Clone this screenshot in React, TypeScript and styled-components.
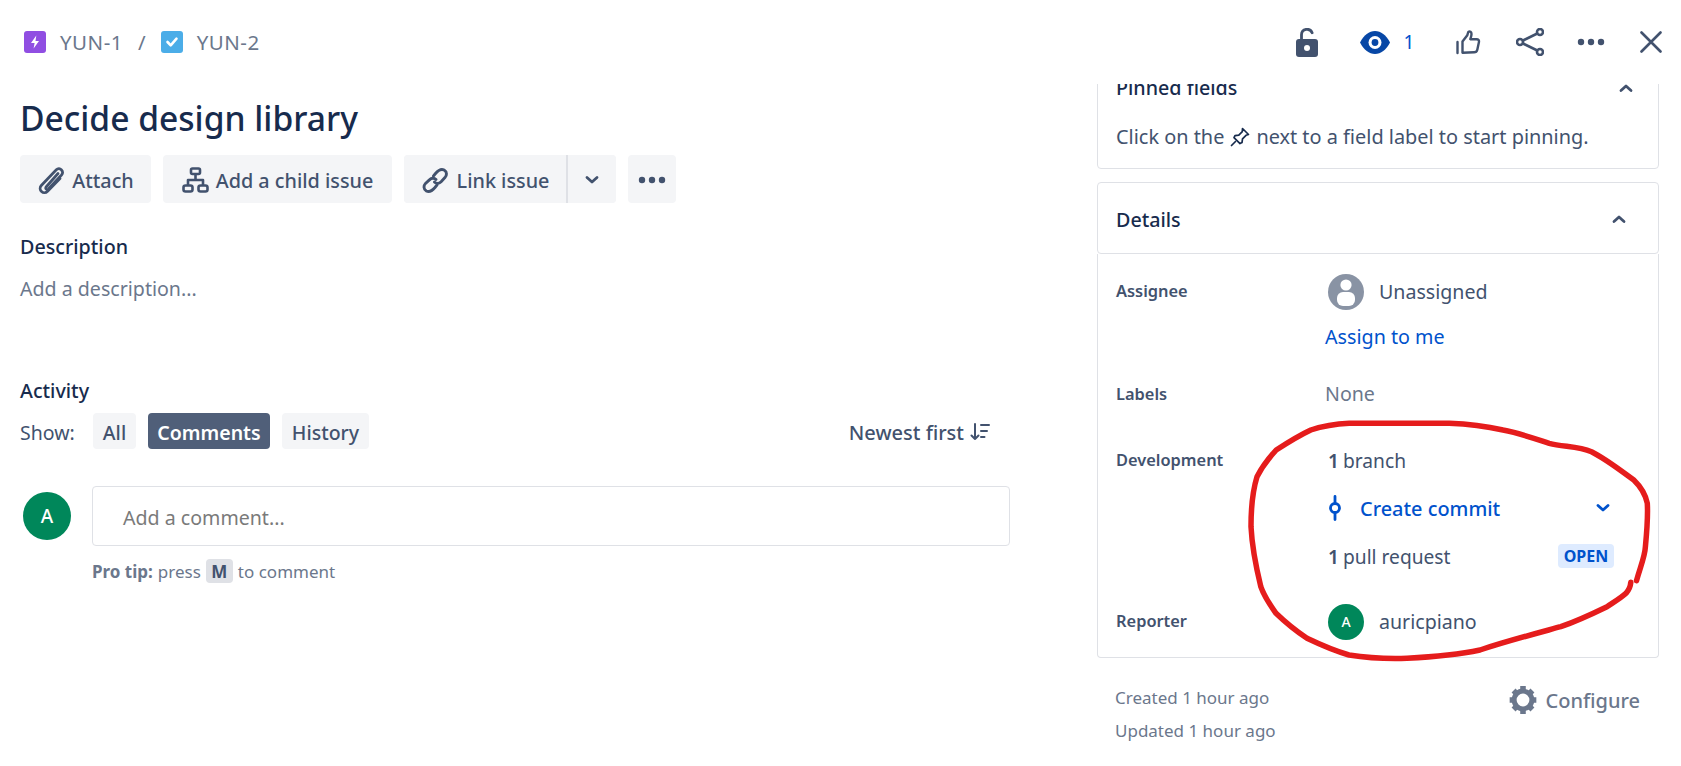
import React from "react";
import styled, { createGlobalStyle } from "styled-components";

const GlobalStyle = createGlobalStyle`
  html, body {
    margin: 0;
    padding: 0;
    background: #fff;
  }
  body {
    font-family: "Noto Sans", "Open Sans", sans-serif;
    font-size: 19.6px;
    color: #172b4d;
  }
  * {
    box-sizing: border-box;
  }
`;

const Page = styled.div`
  position: relative;
  width: 1681px;
  height: 766px;
  overflow: hidden;
`;

const Header = styled.header`
  display: flex;
  align-items: center;
  justify-content: space-between;
  height: 84px;
`;

const Breadcrumbs = styled.nav`
  display: flex;
  align-items: center;
  height: 84px;
  padding-left: 24px;
  color: #6b778c;
  font-size: 20.5px;
`;

const Crumb = styled.span`
  margin-left: 14px;
  letter-spacing: 0.5px;
`;

const CrumbSep = styled.span`
  margin: 0 15px 0 15px;
`;

const Actions = styled.div`
  display: flex;
  align-items: center;
  height: 84px;
`;

const ActionSlot = styled.div<{ $w: number }>`
  display: flex;
  align-items: center;
  justify-content: center;
  width: ${(p) => p.$w}px;
  color: #42526e;
`;

const WatchCount = styled.span`
  margin-left: 14px;
  color: #0052cc;
  font-size: 19px;
`;

const Main = styled.main`
  display: grid;
  grid-template-columns: 1097px 562px;
  height: 682px;
`;

const Left = styled.section`
  padding: 12px 0 0 20px;
`;

const Title = styled.h1`
  margin: 0;
  font-size: 33.6px;
  line-height: 44px;
  font-weight: 500;
  color: #172b4d;
`;

const Toolbar = styled.div`
  display: flex;
  gap: 12px;
  margin-top: 15px;
`;

const ToolButton = styled.button<{ $w: number }>`
  display: flex;
  align-items: center;
  justify-content: center;
  gap: 7px;
  width: ${(p) => p.$w}px;
  height: 48px;
  padding: 2px 0 0;
  border: 0;
  border-radius: 4px;
  background: #f4f5f7;
  color: #42526e;
  font: 500 19.8px "Noto Sans", sans-serif;
`;

const SplitButton = styled.div`
  display: flex;
  width: 212px;
  height: 48px;
  border-radius: 4px;
  overflow: hidden;
  background: #f4f5f7;
`;

const SplitMain = styled(ToolButton)`
  border-right: 2px solid #dfe1e6;
  border-radius: 0;
`;

const SplitCaret = styled(ToolButton)`
  border-radius: 0;
`;

const SectionTitle = styled.h2<{ $top: number }>`
  margin: ${(p) => p.$top}px 0 0;
  font-size: 19.7px;
  line-height: 24px;
  font-weight: 500;
  color: #172b4d;
`;

const Placeholder = styled.p`
  margin: 18px 0 0;
  font-size: 19.6px;
  line-height: 24px;
  color: #6b778c;
`;

const ShowRow = styled.div`
  display: flex;
  align-items: center;
  width: 970px;
  height: 36px;
  margin-top: 10px;
  color: #42526e;
`;

const ShowLabel = styled.span`
  width: 73px;
  padding-top: 2px;
  font-size: 19.5px;
`;

const FilterGroup = styled.div`
  display: flex;
  gap: 12px;
`;

const Filter = styled.button<{ $active?: boolean; $w: number }>`
  width: ${(p) => p.$w}px;
  height: 36px;
  padding: 2px 0 0;
  border: 0;
  border-radius: 4px;
  background: ${(p) => (p.$active ? "#505f79" : "#f4f5f7")};
  color: ${(p) => (p.$active ? "#fff" : "#42526e")};
  font: ${(p) => (p.$active ? 600 : 500)} 19.5px "Noto Sans", sans-serif;
  white-space: nowrap;
`;

const SortButton = styled.div`
  display: flex;
  align-items: center;
  gap: 6px;
  margin-left: auto;
  padding-top: 2px;
  font-size: 20px;
  font-weight: 500;
  color: #42526e;
`;

const CommentRow = styled.div`
  display: flex;
  margin-top: 37px;
`;

const Avatar = styled.div<{ $size: number; $font: number }>`
  display: flex;
  align-items: center;
  justify-content: center;
  flex: none;
  width: ${(p) => p.$size}px;
  height: ${(p) => p.$size}px;
  border-radius: 50%;
  background: #00875a;
  color: #fff;
  font-size: ${(p) => p.$font}px;
  font-weight: 500;
`;

const CommentAvatar = styled(Avatar)`
  margin: 6px 21px 0 3px;
`;

const CommentBox = styled.div`
  display: flex;
  align-items: center;
  width: 918px;
  height: 60px;
  padding: 2px 0 0 30px;
  border: 1px solid #dfe1e6;
  border-radius: 4px;
  color: #7a7a7a;
  font-size: 19.6px;
`;

const ProTip = styled.div`
  display: flex;
  align-items: center;
  gap: 5px;
  height: 24px;
  margin: 13px 0 0 72px;
  color: #6b778c;
  font-size: 17px;
`;

const ProTipLabel = styled.strong`
  font-weight: 700;
`;

const Key = styled.kbd`
  display: inline-flex;
  align-items: center;
  justify-content: center;
  width: 27px;
  height: 24px;
  border-radius: 4px;
  background: #dfe1e6;
  color: #42526e;
  font: 700 17px "Noto Sans", sans-serif;
`;

const Right = styled.aside`
  overflow: hidden;
`;

const PinnedCard = styled.div`
  height: 120px;
  margin-top: -35px;
  padding: 0 22px 0 18px;
  border: 1px solid #dfe1e6;
  border-radius: 4px;
`;

const CardHead = styled.div`
  display: flex;
  align-items: center;
  justify-content: space-between;
  height: 72px;
  font-size: 19.7px;
  font-weight: 500;
  color: #172b4d;
`;

const PinnedHead = styled(CardHead)`
  height: 75px;
`;

const PinnedText = styled.div`
  display: flex;
  align-items: center;
  gap: 6px;
  color: #42526e;
  font-size: 19.9px;
  line-height: 24px;
`;

const DetailsHead = styled(CardHead)`
  margin-top: 13px;
  padding: 2px 29px 0 18px;
  border: 1px solid #dfe1e6;
  border-radius: 4px;
`;

const DetailsBody = styled.div`
  padding: 20px 18px 17px;
  border: 1px solid #dfe1e6;
  border-top: 0;
  border-radius: 0 0 4px 4px;
`;

const Field = styled.div<{ $top?: number }>`
  display: grid;
  grid-template-columns: 209px 1fr;
  margin-top: ${(p) => p.$top ?? 0}px;
`;

const FieldLabel = styled.div<{ $pad?: number }>`
  padding-top: ${(p) => p.$pad ?? 0}px;
  color: #42526e;
  font-size: 16.4px;
  line-height: 24px;
  font-weight: 600;
`;

const FieldValue = styled.div`
  display: flex;
  align-items: center;
  min-height: 24px;
  color: #42526e;
  font-size: 19.6px;
  line-height: 24px;
`;

const PersonValue = styled(FieldValue)`
  gap: 15px;
  padding-left: 3px;
`;

const UnassignedAvatar = styled.div`
  flex: none;
  width: 36px;
  height: 36px;
`;

const AssignLink = styled.a`
  display: block;
  margin-top: 15px;
  color: #0052cc;
  font-size: 19.7px;
  line-height: 24px;
`;

const MutedValue = styled(FieldValue)`
  color: #6b778c;
`;

const DevRow = styled.div<{ $top?: number }>`
  display: flex;
  align-items: center;
  justify-content: space-between;
  height: 24px;
  margin-top: ${(p) => p.$top ?? 0}px;
  padding: 0 27px 0 3px;
  color: #42526e;
  font-size: 19.2px;
`;

const Count = styled.b`
  font-weight: 600;
  margin-right: 4px;
`;

const CommitLink = styled.div`
  display: flex;
  align-items: center;
  gap: 18px;
  color: #0052cc;
  font-size: 19.9px;
  font-weight: 500;
`;

const Lozenge = styled.span`
  display: flex;
  align-items: center;
  justify-content: center;
  width: 56px;
  height: 24px;
  margin-right: -1px;
  border-radius: 4px;
  background: #deebff;
  color: #0052cc;
  font-size: 16px;
  font-weight: 700;
`;

const Footer = styled.footer`
  display: flex;
  justify-content: space-between;
  margin-top: 23px;
  padding: 0 19px 0 18px;
`;

const Stamps = styled.div`
  color: #6b778c;
  font-size: 17px;
  line-height: 33px;
`;

const Configure = styled.div`
  display: flex;
  align-items: center;
  gap: 8px;
  height: 38px;
  color: #6b778c;
  font-size: 20px;
  font-weight: 500;
`;

const Annotation = styled.svg`
  position: absolute;
  top: 0;
  left: 0;
  pointer-events: none;
`;

const Chevron = ({ up, color = "#42526e" }: { up?: boolean; color?: string }) => (
  <svg width="20" height="20" viewBox="0 0 20 20" fill="none">
    <path
      d={up ? "M5 12.5 10 8l5 4.5" : "M5 7.5 10 12l5-4.5"}
      stroke={color}
      strokeWidth="2.8"
      strokeLinecap="round"
      strokeLinejoin="round"
    />
  </svg>
);

const Dots = () => (
  <svg width="28" height="8" viewBox="0 0 28 8">
    <circle cx="4" cy="4" r="3.2" fill="#42526e" />
    <circle cx="14" cy="4" r="3.2" fill="#42526e" />
    <circle cx="24" cy="4" r="3.2" fill="#42526e" />
  </svg>
);

const PersonIcon = () => (
  <svg width="36" height="36" viewBox="0 0 36 36">
    <circle cx="18" cy="18" r="18" fill="#8993a4" />
    <circle cx="18" cy="11" r="5.6" fill="#fff" />
    <rect x="9" y="18" width="18" height="14" rx="6" fill="#fff" />
  </svg>
);

export default function App() {
  return (
    <Page>
      <GlobalStyle />
      <Header>
        <Breadcrumbs>
          <svg width="22" height="22" viewBox="0 0 22 22">
            <rect width="22" height="22" rx="3" fill="#904ee2" />
            <path d="M12.3 4.5 7 12h3.6l-1 5.5L15 10h-3.5z" fill="#fff" />
          </svg>
          <Crumb>YUN-1</Crumb>
          <CrumbSep>/</CrumbSep>
          <svg width="22" height="22" viewBox="0 0 22 22">
            <rect width="22" height="22" rx="3" fill="#4bade8" />
            <path d="m6.5 11 3.2 3.3 5.8-6.6" fill="none" stroke="#fff" strokeWidth="2.6" strokeLinecap="round" strokeLinejoin="round" />
          </svg>
          <Crumb>YUN-2</Crumb>
        </Breadcrumbs>
        <Actions>
          <ActionSlot $w={60}>
            <svg width="22" height="29" viewBox="0 0 22 29">
              <path d="M5.5 14V6.8a5.5 5.5 0 0 1 10.6-2" fill="none" stroke="#42526e" strokeWidth="2.8" strokeLinecap="round" />
              <rect y="11" width="22" height="18" rx="3" fill="#42526e" />
              <circle cx="11" cy="20" r="3" fill="#fff" />
            </svg>
          </ActionSlot>
          <ActionSlot $w={100}>
            <svg width="30" height="23" viewBox="0 0 30 23">
              <path d="M0 11.5C4 4 9 0 15 0s11 4 15 11.5C26 19 21 23 15 23S4 19 0 11.5z" fill="#0747a6" />
              <circle cx="15" cy="11.5" r="6.5" fill="#fff" />
              <circle cx="15" cy="11.5" r="3.4" fill="#0747a6" />
            </svg>
            <WatchCount>1</WatchCount>
          </ActionSlot>
          <ActionSlot $w={62}>
            <svg width="25" height="25" viewBox="0 0 25 25" fill="none" stroke="#42526e" strokeWidth="2.4" strokeLinecap="round" strokeLinejoin="round">
              <path d="M1.5 12v11" />
              <path d="M6.5 22.8V11.5l4.8-6.3c.6-1.3.5-2.5 1.2-3.5 1.4-.7 3 .3 3 2.2 0 2-.7 3.7-1.2 5.3h6.2c2 0 2.8 1.3 2.4 3l-1.6 7.5c-.4 1.8-1.5 2.6-3.2 2.6z" />
            </svg>
          </ActionSlot>
          <ActionSlot $w={62}>
            <svg width="28" height="28" viewBox="0 0 28 28" fill="none" stroke="#42526e" strokeWidth="2.6">
              <circle cx="24" cy="4" r="3" />
              <circle cx="4" cy="14" r="3" />
              <circle cx="24" cy="24" r="3" />
              <path d="m7 12.5 14.3-7M7 15.5l14.3 7" />
            </svg>
          </ActionSlot>
          <ActionSlot $w={60}>
            <Dots />
          </ActionSlot>
          <ActionSlot $w={60}>
            <svg width="22" height="22" viewBox="0 0 22 22" fill="none" stroke="#42526e" strokeWidth="2.6" strokeLinecap="round">
              <path d="m1.5 1.5 19 19M20.5 1.5l-19 19" />
            </svg>
          </ActionSlot>
        </Actions>
      </Header>
      <Main>
        <Left>
          <Title>Decide design library</Title>
          <Toolbar>
            <ToolButton $w={131}>
              <svg width="28" height="30" viewBox="0 0 28 30" fill="none" stroke="#42526e" strokeWidth="2.7" strokeLinecap="round">
                <path d="M21 8.5 9.5 21.5c-1.700 1.900-.1 4 1.900 2.500L24.500 10c3-3.500-1.800-8.700-5.200-5.200L4.300 20.500c-3.700 4.200 2.200 10 6.300 5.800L23 13.500" />
              </svg>
              Attach
            </ToolButton>
            <ToolButton $w={229}>
              <svg width="27" height="26" viewBox="0 0 27 26" fill="none" stroke="#42526e" strokeWidth="2.6" strokeLinejoin="round">
                <rect x="9" y="1.5" width="9" height="5.5" rx="1.5" />
                <rect x="1.5" y="18.5" width="9" height="6" rx="2" />
                <rect x="16.5" y="18.5" width="9" height="6" rx="2" />
                <path d="M13.5 7v6M6 18.5V13h15v5.5" />
              </svg>
              Add a child issue
            </ToolButton>
            <SplitButton>
              <SplitMain $w={164}>
                <svg width="29" height="29" viewBox="0 0 27 27" fill="none" stroke="#42526e" strokeWidth="2.7" strokeLinecap="round">
                  <path d="M11.5 9.5l2-2.500c2.400-2.800 5-4.800 8-3.200 3 1.800 2.600 5 .8 7l-3.600 3.800c-2 2-4.600 2-6.200.3" />
                  <path d="M15 17.5l-2 2.500c-2.400 2.800-5 4.800-8 3.200-3-1.800-2.600-5-.8-7L7.800 12.900c2-2 4.600-2 6.200-.3" />
                </svg>
                Link issue
              </SplitMain>
              <SplitCaret $w={48}>
                <Chevron />
              </SplitCaret>
            </SplitButton>
            <ToolButton $w={48}>
              <Dots />
            </ToolButton>
          </Toolbar>
          <SectionTitle $top={32}>Description</SectionTitle>
          <Placeholder>Add a description...</Placeholder>
          <SectionTitle $top={78}>Activity</SectionTitle>
          <ShowRow>
            <ShowLabel>Show:</ShowLabel>
            <FilterGroup>
              <Filter $w={43}>All</Filter>
              <Filter $active $w={122}>Comments</Filter>
              <Filter $w={87}>History</Filter>
            </FilterGroup>
            <SortButton>
              Newest first
              <svg width="20" height="20" viewBox="0 0 20 20" fill="none" stroke="#42526e" strokeWidth="2" strokeLinecap="round" strokeLinejoin="round">
                <path d="M5 2v15M1.5 13.5 5 17l3.5-3.500M11 3h8M11 9h6M11 15h3.500" />
              </svg>
            </SortButton>
          </ShowRow>
          <CommentRow>
            <CommentAvatar $size={48} $font={19}>A</CommentAvatar>
            <CommentBox>Add a comment...</CommentBox>
          </CommentRow>
          <ProTip>
            <ProTipLabel>Pro tip:</ProTipLabel> press <Key>M</Key> to comment
          </ProTip>
        </Left>
        <Right>
          <PinnedCard>
            <PinnedHead>
              Pinned fields
              <Chevron up />
            </PinnedHead>
            <PinnedText>
              Click on the
              <svg width="20" height="20" viewBox="0 0 20 20" fill="none" stroke="#172b4d" strokeWidth="1.7" strokeLinejoin="round" strokeLinecap="round">
                <path d="m12.5 1.5 6 6-2.500.8-3.500 3.500-.5 3.800-2 1-6-6 1-2 3.800-.5 3.500-3.500z" />
                <path d="m5.5 14.5-4 4" />
              </svg>
              next to a field label to start pinning.
            </PinnedText>
          </PinnedCard>
          <DetailsHead>
            Details
            <Chevron up />
          </DetailsHead>
          <DetailsBody>
            <Field>
              <FieldLabel $pad={5}>Assignee</FieldLabel>
              <div>
                <PersonValue>
                  <UnassignedAvatar>
                    <PersonIcon />
                  </UnassignedAvatar>
                  Unassigned
                </PersonValue>
                <AssignLink>Assign to me</AssignLink>
              </div>
            </Field>
            <Field $top={33}>
              <FieldLabel>Labels</FieldLabel>
              <MutedValue>None</MutedValue>
            </Field>
            <Field $top={42}>
              <FieldLabel>Development</FieldLabel>
              <div>
                <DevRow>
                  <span>
                    <Count>1</Count>branch
                  </span>
                </DevRow>
                <DevRow $top={24}>
                  <CommitLink>
                    <svg width="14" height="26" viewBox="0 0 14 26" fill="none" stroke="#0052cc" strokeWidth="2.8" strokeLinecap="round">
                      <circle cx="7" cy="13" r="4.5" />
                      <path d="M7 1.5v7M7 17.5v7" />
                    </svg>
                    Create commit
                  </CommitLink>
                  <Chevron color="#0052cc" />
                </DevRow>
                <DevRow $top={24}>
                  <span>
                    <Count>1</Count>pull request
                  </span>
                  <Lozenge>OPEN</Lozenge>
                </DevRow>
              </div>
            </Field>
            <Field $top={36}>
              <FieldLabel $pad={5}>Reporter</FieldLabel>
              <PersonValue>
                <Avatar $size={36} $font={14}>A</Avatar>
                auricpiano
              </PersonValue>
            </Field>
          </DetailsBody>
          <Footer>
            <Stamps>
              Created 1 hour ago
              <br />
              Updated 1 hour ago
            </Stamps>
            <Configure>
              <svg width="30" height="30" viewBox="0 0 27 27" fill="none" stroke="#6b778c">
                <circle cx="13.5" cy="13.5" r="8" strokeWidth="4.5" />
                <path d="M13.5 1v4M13.5 22v4M1.5 13.5h4M21.5 13.5h4M5 5l2.800 2.800M19.200 19.200 22 22M22 5l-2.800 2.800M7.800 19.200 5 22" strokeWidth="5" />
              </svg>
              Configure
            </Configure>
          </Footer>
        </Right>
      </Main>
      <Annotation width="1681" height="766" viewBox="0 0 1681 766" fill="none">
        <path
          d="M1636.500 580.700C1641 565 1645 556 1645.400 546.700C1647 530 1648 515 1647.300 503.300C1645 492 1640 486 1633.800 480C1620 470 1606 459 1591.500 451.700C1578 446 1563 447 1549.200 443.300C1533 438 1519 433 1503 430C1485 426 1468 424 1449.200 423.300L1349.200 423.300C1335 424 1323 426 1310.800 430C1298 436 1287 443 1276.200 450C1268 459 1262 467 1257 476.700C1252 493 1251 510 1251 526.700C1252 547 1256 567 1260.800 586.700C1264 596 1270 605 1276 613.300C1285 622 1296 631 1307 638.300C1321 645 1335 651 1349 655C1368 658 1387 659 1407 658.300C1431 657 1456 655 1480 650C1507 641 1534 634 1560.800 626.700C1577 621 1592 614 1607 606.700C1614 602 1621 598 1626 593.300C1629 590 1630.500 586 1630.800 582.300"
          stroke="#e51c1c"
          strokeWidth="5.5"
          strokeLinecap="round"
          strokeLinejoin="round"
        />
      </Annotation>
    </Page>
  );
}
